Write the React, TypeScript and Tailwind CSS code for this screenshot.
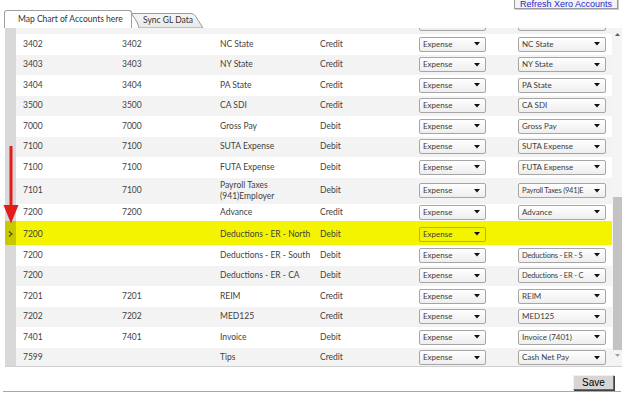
import React from "react";

type Row = {
  a: string;
  b: string;
  c: React.ReactNode;
  d: string;
  s1: string;
  s2?: string;
  h: string;
  hl?: boolean;
};

const rows: Row[] = [
  { a: "", b: "", c: "", d: "", s1: "", s2: "", h: "h-[20.5px]" },
  { a: "3402", b: "3402", c: "NC State", d: "Credit", s1: "Expense", s2: "NC State", h: "h-[20.5px]" },
  { a: "3403", b: "3403", c: "NY State", d: "Credit", s1: "Expense", s2: "NY State", h: "h-[20.5px]" },
  { a: "3404", b: "3404", c: "PA State", d: "Credit", s1: "Expense", s2: "PA State", h: "h-[20.5px]" },
  { a: "3500", b: "3500", c: "CA SDI", d: "Credit", s1: "Expense", s2: "CA SDI", h: "h-[20.5px]" },
  { a: "7000", b: "7000", c: "Gross Pay", d: "Debit", s1: "Expense", s2: "Gross Pay", h: "h-[20.5px]" },
  { a: "7100", b: "7100", c: "SUTA Expense", d: "Debit", s1: "Expense", s2: "SUTA Expense", h: "h-[20.5px]" },
  { a: "7100", b: "7100", c: "FUTA Expense", d: "Debit", s1: "Expense", s2: "FUTA Expense", h: "h-[20.5px]" },
  {
    a: "7101",
    b: "7100",
    c: (
      <>
        Payroll Taxes
        <br />
        (941)Employer
      </>
    ),
    d: "Debit",
    s1: "Expense",
    s2: "Payroll Taxes (941)E",
    h: "h-[26px]",
  },
  { a: "7200", b: "7200", c: "Advance", d: "Credit", s1: "Expense", s2: "Advance", h: "h-[17px]" },
  { a: "7200", b: "", c: "Deductions - ER - North", d: "Debit", s1: "Expense", h: "h-[24.5px]", hl: true },
  { a: "7200", b: "", c: "Deductions - ER - South", d: "Debit", s1: "Expense", s2: "Deductions - ER - S", h: "h-[20.5px]" },
  { a: "7200", b: "", c: "Deductions - ER - CA", d: "Debit", s1: "Expense", s2: "Deductions - ER - C", h: "h-[20.5px]" },
  { a: "7201", b: "7201", c: "REIM", d: "Credit", s1: "Expense", s2: "REIM", h: "h-[20.5px]" },
  { a: "7202", b: "7202", c: "MED125", d: "Credit", s1: "Expense", s2: "MED125", h: "h-[20.5px]" },
  { a: "7401", b: "7401", c: "Invoice", d: "Debit", s1: "Expense", s2: "Invoice (7401)", h: "h-[20.5px]" },
  { a: "7599", b: "", c: "Tips", d: "Credit", s1: "Expense", s2: "Cash Net Pay", h: "h-[20.5px]" },
];

function Caret() {
  return (
    <svg width="6" height="4" viewBox="0 0 6 4" className="shrink-0">
      <path d="M0 0 L6 0 L3 3.5 Z" fill="#111" />
    </svg>
  );
}

function Select({ value, w, hl }: { value: string; w: string; hl?: boolean }) {
  const tight = value.length > 16;
  return (
    <div
      className={`${w} h-[15px] flex items-center gap-[2px] pl-[3px] pr-[5px] rounded-[2px] border ${
        hl
          ? "border-[#b8b800] bg-[#f4f400]"
          : "border-[#a6a6a6] bg-gradient-to-b from-white to-[#eeeeee]"
      }`}
    >
      <span
        className={`flex-1 min-w-0 whitespace-nowrap text-[#3c3c3c] leading-[13px] ${
          tight ? "text-[7.5px] tracking-[-0.2px]" : "text-[8px]"
        }`}
      >
        {value}
      </span>
      <Caret />
    </div>
  );
}

export default function App() {
  return (
    <div
      className="w-[624px] h-[394px] bg-white overflow-hidden flex flex-col text-[8.5px] text-[#3f3f3f]"
      style={{ fontFamily: "Lato, 'Open Sans', sans-serif" }}
    >
      {/* top bar */}
      <div className="h-[10px] flex justify-end pr-[6px]">
        <div
          className="mt-[-1px] h-[10px] w-[104px] flex items-center justify-center border border-[#9a9a9a] bg-[#f3f3f3] shadow-[1px_1px_0_#c8c8c8] text-[9px] leading-[8px] text-[#2424d6]"
          style={{ fontFamily: "'Liberation Sans', Arial, sans-serif" }}
        >
          Refresh Xero Accounts
        </div>
      </div>

      {/* tabs */}
      <div className="h-[18px] flex items-end pl-[4px]">
        <div className="h-[18px] w-[128px] border border-b-0 border-[#a0a0a0] rounded-t-[3px] bg-white flex items-center pl-[13px] text-[#333] leading-[11px] z-10">
          Map Chart of Accounts here
        </div>
        <div className="relative h-[15px] w-[73px] ml-[-1px] flex items-center pl-[12px] text-[#333] leading-[11px]">
          <svg className="absolute inset-0" width="73" height="15" viewBox="0 0 73 15">
            <defs>
              <linearGradient id="tg" x1="0" y1="0" x2="0" y2="1">
                <stop offset="0" stopColor="#f6f6f6" />
                <stop offset="1" stopColor="#e8e8e8" />
              </linearGradient>
            </defs>
            <path
              d="M0.5 0.5 L60 0.5 Q63 0.5 64.5 3 L72 15 L8 15 L6 9 Z"
              fill="url(#tg)"
              stroke="#9a9a9a"
              strokeWidth="1"
            />
          </svg>
          <span className="relative">Sync GL Data</span>
        </div>
      </div>

      {/* grid */}
      <div className="relative ml-[5px] mr-[2px] h-[339px] flex border-b border-[#d0d0d0]">
        <div className="flex-1 overflow-hidden">
          <div className="mt-[-14.5px]">
            {rows.map((r, i) => {
              const stripe = r.hl ? "bg-[#f4f400]" : i % 2 === 0 ? "bg-[#f3f3f3]" : "bg-white";
              return (
                <div key={i} className={`flex ${r.h} ${stripe}`}>
                  <div
                    className={`w-[11px] shrink-0 flex items-center justify-center ${
                      r.hl ? "bg-[#c9c900]" : "bg-[#d9d9d9]"
                    }`}
                  >
                    {r.hl && (
                      <svg width="5" height="6" viewBox="0 0 5 6" className="mt-[3px]">
                        <path d="M1 0.5 L4 3 L1 5.5" fill="none" stroke="#4a4a10" strokeWidth="1.2" />
                      </svg>
                    )}
                  </div>
                  <div
                    className={`flex-1 grid grid-cols-[99px_99px_99px_99px_99px_1fr] items-center ${
                      r.hl ? "pt-[3px]" : ""
                    }`}
                  >
                    <div className="pl-[7px]">{r.a}</div>
                    <div className="pl-[7px]">{r.b}</div>
                    <div className="pl-[6px] leading-[10.7px]">{r.c}</div>
                    <div className="pl-[7px]">{r.d}</div>
                    <div className="pl-[7px]">
                      <Select value={r.s1} w="w-[67px]" hl={r.hl} />
                    </div>
                    <div className="pl-[7px]">
                      {r.s2 !== undefined && <Select value={r.s2} w="w-[88px]" />}
                    </div>
                  </div>
                </div>
              );
            })}
          </div>
        </div>
        {/* scrollbar */}
        <div className="w-[10px] bg-[#f4f4f4] flex flex-col items-center">
          <div className="h-[10px] flex items-center justify-center mt-[1px]">
            <svg width="5" height="3" viewBox="0 0 5 3">
              <path d="M0 3 L2.5 0 L5 3 Z" fill="#606060" />
            </svg>
          </div>
          <div className="mt-[158px] h-[153px] w-[9px] bg-[#c3c3c3]" />
          <div className="h-[10px] flex items-center justify-center">
            <svg width="5" height="3" viewBox="0 0 5 3">
              <path d="M0 0 L5 0 L2.5 3 Z" fill="#a0a0a0" />
            </svg>
          </div>
        </div>

        {/* red arrow annotation */}
        <svg
          className="absolute left-[-2px] top-[118px]"
          width="16"
          height="78"
          viewBox="0 0 16 78"
        >
          <line x1="8" y1="0" x2="8" y2="62" stroke="#e21b1b" strokeWidth="3" />
          <path d="M0.5 59 L15.5 59 L8 77.5 Z" fill="#e21b1b" />
        </svg>
      </div>

      {/* footer */}
      <div className="flex justify-end pr-[10px] pt-[8px]">
        <button
          className="h-[15px] w-[41px] bg-[#d6d6d6] border border-[#6a6a6a] border-t-[#f0f0f0] border-l-[#f0f0f0] shadow-[1px_1px_0_#404040] text-[10px] text-black leading-[12px]"
          style={{ fontFamily: "'Liberation Sans', Arial, sans-serif" }}
        >
          Save
        </button>
      </div>
      <div className="mt-auto mb-[2px] mx-[3px] h-[1px] bg-[#8eaadb]" />
    </div>
  );
}
